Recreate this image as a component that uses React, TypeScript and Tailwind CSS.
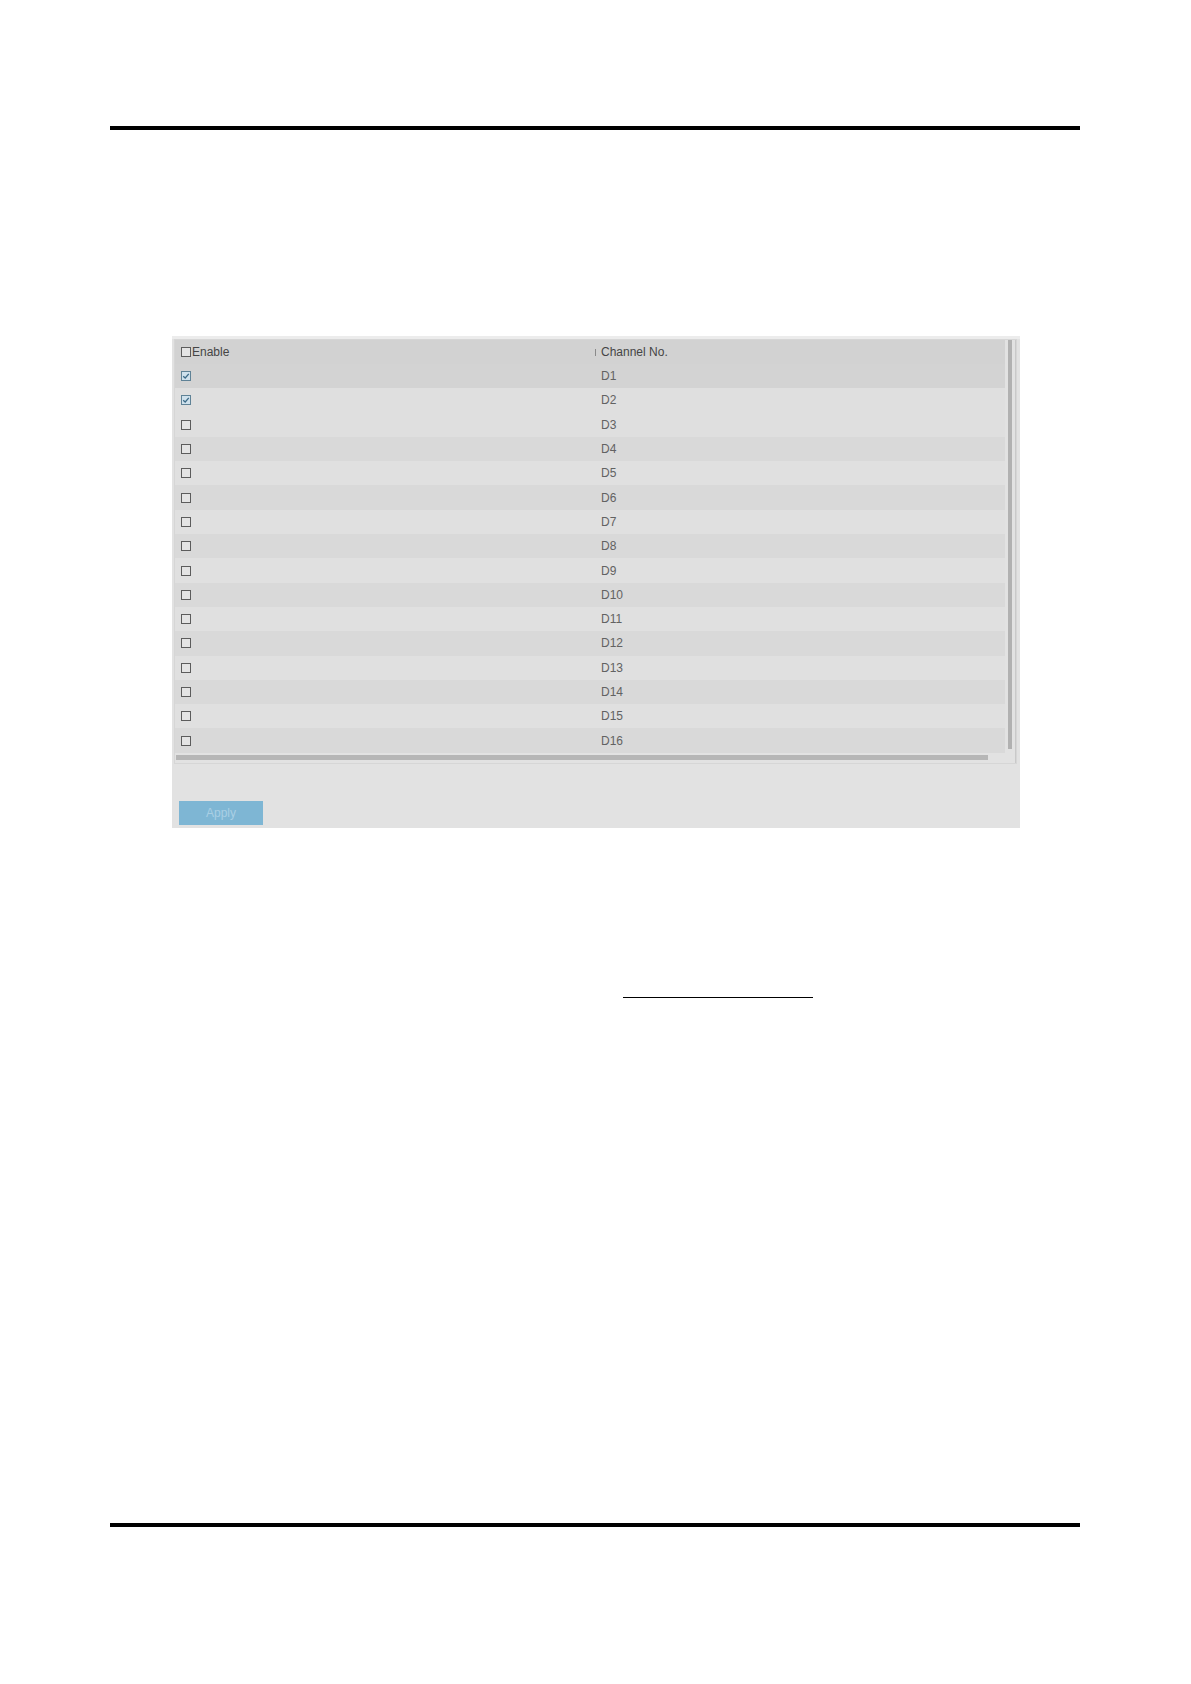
const channels = Array.from({ length: 16 }, (_, i) => ({
  name: `D${i + 1}`,
  enabled: i < 2,
}));

// row shades as seen in the capture: D1 highlighted, then light / medium stripes
function rowBg(i: number) {
  if (i === 0) return 'bg-[#d3d3d3]';
  if (i === 1 || i === 2) return 'bg-[#dfdfdf]';
  return i % 2 === 1 ? 'bg-[#d9d9d9]' : 'bg-[#e0e0e0]';
}

function Checkbox({ checked }: { checked: boolean }) {
  if (checked) {
    return (
      <span className="flex h-[10px] w-[10px] items-center justify-center border border-[#5f8296] bg-[#cfe1ec]">
        <svg width="8" height="8" viewBox="0 0 8 8" fill="none" stroke="#3d6b88" strokeWidth="1.3">
          <path d="M1.2 4.2 3.2 6 6.8 1.8" />
        </svg>
      </span>
    );
  }
  return <span className="block h-[10px] w-[10px] border border-[#5c5c5c] bg-[#e4e4e4]" />;
}

export default function App() {
  return (
    <div className="h-[1684px] w-[1191px] bg-white pt-[126px] font-['Liberation_Sans',Arial,sans-serif] text-[12px] text-[#626262]">
      {/* page header rule */}
      <div className="ml-[110px] h-[4px] w-[970px] bg-black" />

      {/* channel list panel */}
      <div className="ml-[172px] mt-[206px] flex h-[492px] w-[848px] flex-col bg-[#e2e2e2]">
        <div className="h-[3px] bg-[#ececec]" />
        <div className="ml-[2px] flex h-[425px] w-[843px] border border-[#d6d6d6]">
          <div className="flex w-[830px] flex-col">
            {/* header */}
            <div className="flex h-[24px] items-center bg-[#d2d2d2] text-[#454545]">
              <div className="flex w-[420px] items-center pl-[6px]">
                <Checkbox checked={false} />
                <span className="ml-[1px]">Enable</span>
              </div>
              <span className="h-[7px] w-px bg-[#8a8a8a]" />
              <span className="ml-[5px]">Channel No.</span>
            </div>
            {channels.map((c, i) => (
              <div key={c.name} className={`flex h-[24.3px] items-center ${rowBg(i)}`}>
                <div className="w-[426px] pl-[6px]">
                  <Checkbox checked={c.enabled} />
                </div>
                <span>{c.name}</span>
              </div>
            ))}
            {/* horizontal scrollbar */}
            <div className="flex h-[9px] items-center pl-[1px]">
              <div className="h-[5px] w-[812px] bg-[#b6b6b6]" />
            </div>
          </div>
          {/* vertical scrollbar */}
          <div className="flex flex-1 pl-[3px]">
            <div className="h-[409px] w-[4px] bg-[#b1b1b1]" />
            <div className="ml-[3px] w-px bg-[#c9c9c9]" />
          </div>
        </div>
        <div className="flex flex-1 items-end pb-[3px] pl-[7px]">
          <button className="h-[24px] w-[84px] bg-[#7eb6d4] text-[12px] text-[#a9cfe4]">Apply</button>
        </div>
      </div>

      {/* underlined reference */}
      <div className="ml-[623px] mt-[169px] h-px w-[190px] bg-black" />

      {/* page footer rule */}
      <div className="ml-[110px] mt-[525px] h-[4px] w-[970px] bg-black" />
    </div>
  );
}
